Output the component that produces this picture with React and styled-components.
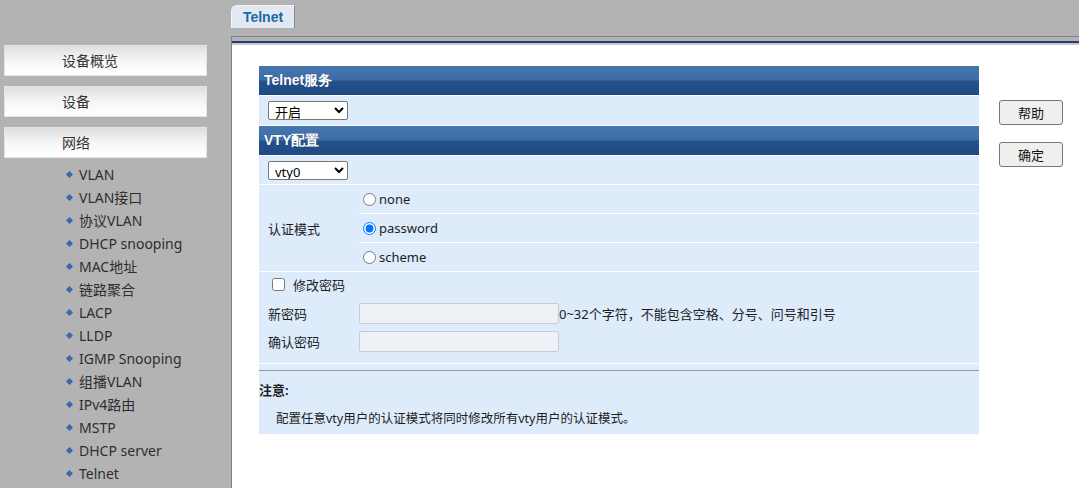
import { useState } from 'react';
import styled, { createGlobalStyle } from 'styled-components';

const GlobalStyle = createGlobalStyle`
  html, body {
    margin: 0;
    padding: 0;
    background: #b3b3b3;
  }
  body {
    font-family: "Noto Sans", "Noto Sans CJK SC", sans-serif;
    font-size: 13px;
    color: #1e1e1e;
  }
`;

const MENU = ['设备概览', '设备', '网络'];
const NAV = [
  'VLAN', 'VLAN接口', '协议VLAN', 'DHCP snooping', 'MAC地址', '链路聚合', 'LACP',
  'LLDP', 'IGMP Snooping', '组播VLAN', 'IPv4路由', 'MSTP', 'DHCP server', 'Telnet',
];
const MODES = ['none', 'password', 'scheme'];

export default function App() {
  const [mode, setMode] = useState('password');
  const [change, setChange] = useState(false);

  return (
    <Page>
      <GlobalStyle />
      <Sidebar>
        <MenuGroup>
          {MENU.map((m) => <MenuButton key={m}>{m}</MenuButton>)}
        </MenuGroup>
        <NavList>
          {NAV.map((n) => <NavItem key={n}>{n}</NavItem>)}
        </NavList>
      </Sidebar>

      <Main>
        <TabBar>
          <Tab>Telnet</Tab>
        </TabBar>
        <FrameWrap>
          <Divider />
          <NavyLine />
          <Frame>
            <Panel>
              <SectionHeader>Telnet服务</SectionHeader>
              <Row $h={29}>
                <Select defaultValue="on">
                  <option value="on">开启</option>
                  <option value="off">关闭</option>
                </Select>
              </Row>
              <SectionHeader>VTY配置</SectionHeader>
              <Row $h={28}>
                <Select defaultValue="vty0">
                  <option value="vty0">vty0</option>
                  <option value="vty1">vty1</option>
                  <option value="vty2">vty2</option>
                  <option value="vty3">vty3</option>
                  <option value="vty4">vty4</option>
                </Select>
              </Row>
              <AuthBlock>
                <AuthLabel>认证模式</AuthLabel>
                <AuthOptions>
                  {MODES.map((m) => (
                    <RadioRow key={m}>
                      <Radio
                        type="radio"
                        name="mode"
                        checked={mode === m}
                        onChange={() => setMode(m)}
                      />
                      <span>{m}</span>
                    </RadioRow>
                  ))}
                </AuthOptions>
              </AuthBlock>
              <PwdBlock>
                <CheckRow>
                  <Check type="checkbox" checked={change} onChange={(e) => setChange(e.target.checked)} />
                  <span>修改密码</span>
                </CheckRow>
                <FieldRow>
                  <FieldLabel>新密码</FieldLabel>
                  <TextInput type="password" disabled={!change} />
                  <Hint>0~32个字符，不能包含空格、分号、问号和引号</Hint>
                </FieldRow>
                <FieldRow>
                  <FieldLabel>确认密码</FieldLabel>
                  <TextInput type="password" disabled={!change} />
                </FieldRow>
              </PwdBlock>
              <Notes>
                <NoteTitle>注意:</NoteTitle>
                <NoteText>配置任意vty用户的认证模式将同时修改所有vty用户的认证模式。</NoteText>
              </Notes>
            </Panel>
            <Actions>
              <ActionButton>帮助</ActionButton>
              <ActionButton>确定</ActionButton>
            </Actions>
          </Frame>
        </FrameWrap>
      </Main>
    </Page>
  );
}

const Page = styled.div`
  display: flex;
  height: 488px;
  overflow: hidden;
  background: #b3b3b3;
`;

const Sidebar = styled.div`
  width: 231px;
  flex-shrink: 0;
  padding-top: 45px;
  box-sizing: border-box;
`;

const MenuGroup = styled.div`
  display: flex;
  flex-direction: column;
  gap: 10px;
  padding-left: 4px;
`;

const MenuButton = styled.div`
  width: 203px;
  height: 31px;
  box-sizing: border-box;
  border: 1px solid #e4e4e4;
  background: linear-gradient(to bottom, #dedede 0%, #efefef 35%, #f8f8f8 60%, #ffffff 100%);
  padding-left: 57px;
  line-height: 29px;
  font-size: 14px;
  color: #333;
`;

const NavList = styled.ul`
  list-style: none;
  margin: 5px 0 0;
  padding: 0 0 0 79px;
`;

const NavItem = styled.li`
  position: relative;
  height: 23px;
  line-height: 23px;
  font-size: 14px;
  color: #2e2e2e;

  &::before {
    content: '';
    position: absolute;
    left: -12px;
    top: 9px;
    width: 5px;
    height: 5px;
    background: #3a68a8;
    transform: rotate(45deg);
  }
`;

const Main = styled.div`
  flex: 1;
  display: flex;
  flex-direction: column;
  min-width: 0;
`;

const TabBar = styled.div`
  height: 36px;
  box-sizing: border-box;
  padding-top: 5px;
  display: flex;
`;

const Tab = styled.div`
  width: 64px;
  height: 23px;
  box-sizing: border-box;
  border: 1px solid #f4f4f4;
  border-right-color: #8a8a8a;
  border-bottom: none;
  border-top-left-radius: 6px;
  background: #e2e9f3;
  font-family: "Liberation Sans", Arial, sans-serif;
  font-weight: bold;
  font-size: 14px;
  color: #1b6aa3;
  text-align: center;
  line-height: 22px;
`;

const FrameWrap = styled.div`
  flex: 1;
  display: flex;
  flex-direction: column;
  border-left: 1px solid #808080;
`;

const Divider = styled.div`
  height: 4px;
  border-top: 1px solid #808080;
`;

const NavyLine = styled.div`
  height: 2px;
  background: #203e78;
  border-bottom: 2px solid #c6c6c6;
`;

const Frame = styled.div`
  flex: 1;
  background: #fff;
  display: flex;
  align-items: flex-start;
  padding: 21px 0 0 27px;
`;

const Panel = styled.div`
  width: 720px;
  background: #fff;
  display: flex;
  flex-direction: column;
  gap: 1px;
`;

const SectionHeader = styled.div`
  height: 29px;
  line-height: 29px;
  padding-left: 5px;
  background: linear-gradient(to bottom, #4677b0 0%, #3d6ca6 48%, #24518b 52%, #1e4a83 100%);
  color: #fff;
  font-family: "Liberation Sans", Arial, sans-serif;
  font-weight: bold;
  font-size: 14px;
  text-shadow: 0 0 1px rgba(0, 0, 0, 0.4);
`;

const Row = styled.div`
  height: ${(p) => p.$h}px;
  background: #ddebfb;
  display: flex;
  align-items: center;
  padding-left: 9px;
`;

const Select = styled.select`
  width: 80px;
  height: 19px;
  font-family: "Noto Sans", "Noto Sans CJK SC", sans-serif;
  font-size: 13px;
  border: 1px solid #767676;
  border-radius: 2px;
  background: #fff;
  padding: 0 2px;
  color: #000;
`;

const AuthBlock = styled.div`
  display: flex;
  background: #ddebfb;
`;

const AuthLabel = styled.div`
  width: 100px;
  padding-left: 9px;
  box-sizing: border-box;
  display: flex;
  align-items: center;
`;

const AuthOptions = styled.div`
  flex: 1;
  display: flex;
  flex-direction: column;
  gap: 1px;
  background: #fff;
`;

const RadioRow = styled.label`
  height: 28px;
  background: #ddebfb;
  display: flex;
  align-items: center;
  gap: 3px;
  font-size: 13px;
`;

const Radio = styled.input`
  width: 13px;
  height: 13px;
  margin: 0 0 0 4px;
`;

const PwdBlock = styled.div`
  background: #ddebfb;
  padding: 3px 0 8px;
  display: flex;
  flex-direction: column;
`;

const CheckRow = styled.label`
  height: 18px;
  display: flex;
  align-items: center;
  gap: 8px;
  padding-left: 13px;
  margin-bottom: 6px;
`;

const Check = styled.input`
  width: 13px;
  height: 13px;
  margin: 0;
`;

const FieldRow = styled.div`
  height: 28px;
  display: flex;
  align-items: center;
`;

const FieldLabel = styled.div`
  width: 100px;
  padding-left: 9px;
  box-sizing: border-box;
`;

const TextInput = styled.input`
  width: 200px;
  height: 21px;
  box-sizing: border-box;
  border: 1px solid #c6ccd2;
  border-radius: 2px;
  background: #edf2f7;
  margin: 0;
`;

const Hint = styled.span`
  font-size: 13px;
`;

const Notes = styled.div`
  background: #ddebfb;
  padding: 6px 0 7px;
`;

const NoteTitle = styled.div`
  border-top: 1px solid #9a9a9a;
  padding-top: 11px;
  font-weight: bold;
  height: 17px;
  line-height: 17px;
`;

const NoteText = styled.div`
  padding: 11px 0 0 17px;
  line-height: 17px;
  font-size: 12.5px;
`;

const Actions = styled.div`
  display: flex;
  flex-direction: column;
  gap: 17px;
  margin: 34px 0 0 20px;
`;

const ActionButton = styled.button`
  width: 64px;
  height: 25px;
  background: #efefef;
  border: 1px solid #767676;
  border-radius: 3px;
  font-family: "Noto Sans", "Noto Sans CJK SC", sans-serif;
  font-size: 13px;
  color: #111;
  padding: 0;
`;
